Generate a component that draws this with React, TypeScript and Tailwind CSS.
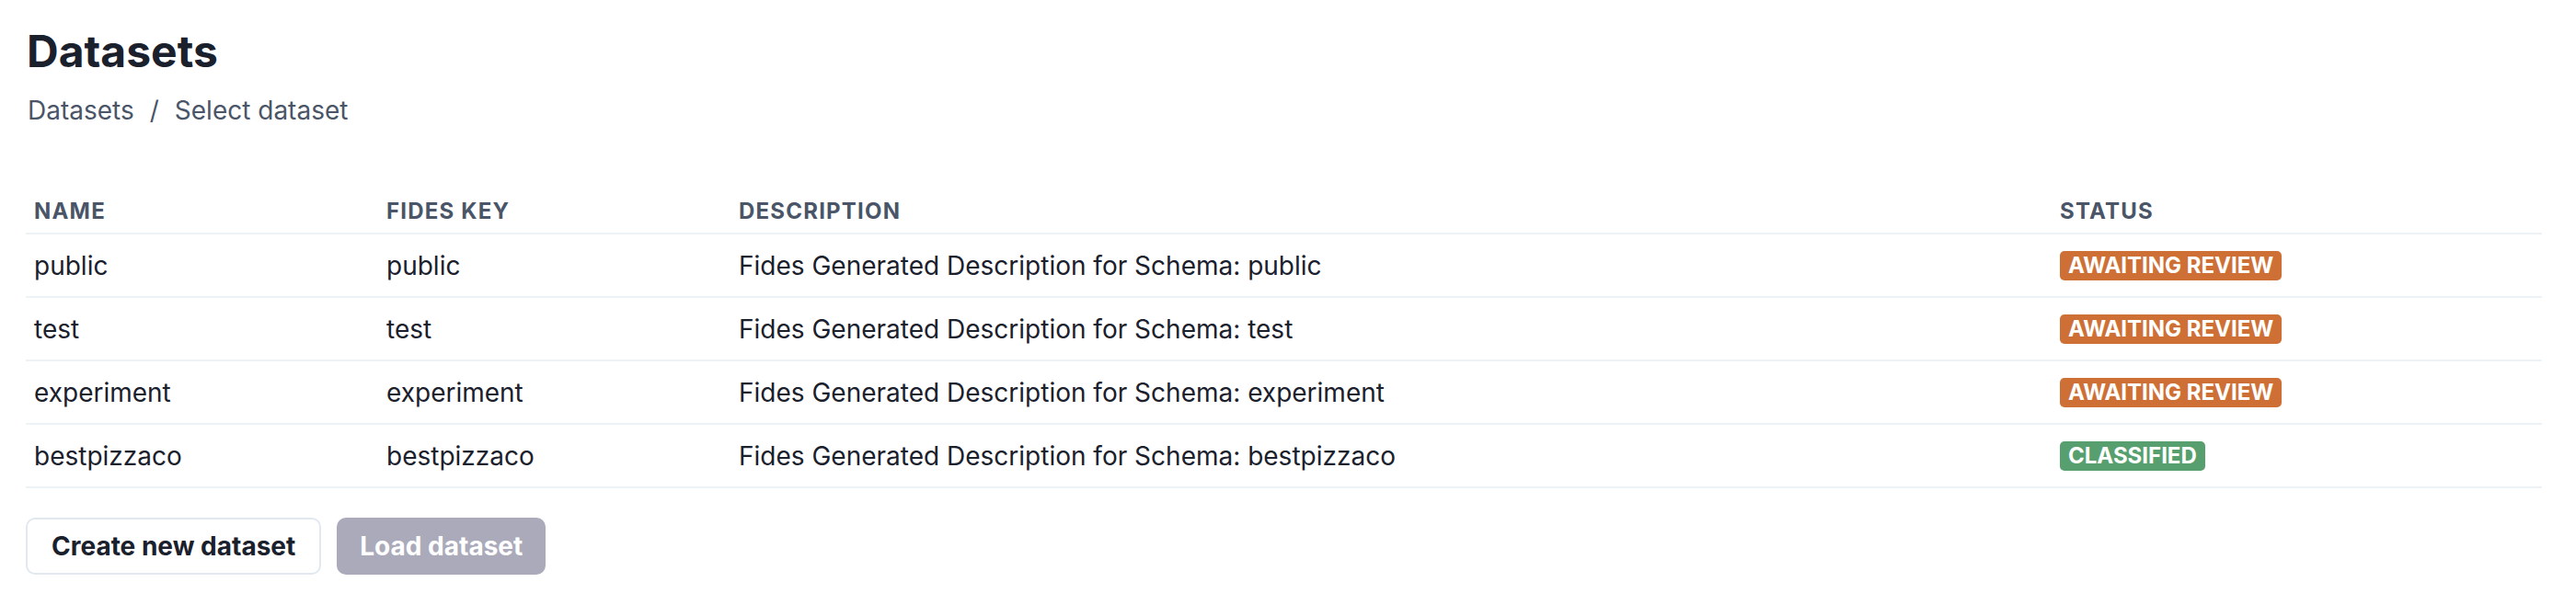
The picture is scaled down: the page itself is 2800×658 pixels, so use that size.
import React from "react";

// ── Datasets page ────────────────────────────────────────────────────────────

type Row = {
  name: string;
  fidesKey: string;
  description: string;
  status: "AWAITING REVIEW" | "CLASSIFIED";
};

const ROWS: Row[] = [
  { name: "public", fidesKey: "public", description: "Fides Generated Description for Schema: public", status: "AWAITING REVIEW" },
  { name: "test", fidesKey: "test", description: "Fides Generated Description for Schema: test", status: "AWAITING REVIEW" },
  { name: "experiment", fidesKey: "experiment", description: "Fides Generated Description for Schema: experiment", status: "AWAITING REVIEW" },
  { name: "bestpizzaco", fidesKey: "bestpizzaco", description: "Fides Generated Description for Schema: bestpizzaco", status: "CLASSIFIED" },
];

const COLS = "grid grid-cols-[383px_383px_1436px_1fr]";

function StatusBadge({ status }: { status: Row["status"] }) {
  const color = status === "CLASSIFIED" ? "bg-[#579f6e]" : "bg-[#ce7036]";
  return (
    <span className={`${color} inline-flex items-center h-[32px] px-[9px] rounded-[5px] text-white text-[24px] font-bold leading-none`}>
      {status}
    </span>
  );
}

export default function App() {
  return (
    <div className="min-h-screen bg-white pl-[28px] pr-[37px] pt-[27px] font-['Inter',sans-serif]">
      {/* Header */}
      <h1 className="text-[48px] leading-[58px] font-bold text-[#1a202c] pl-[1px]">Datasets</h1>
      <div className="mt-[16px] flex items-center text-[28px] leading-[38px] text-[#4a5568] pl-[2px]">
        <span>Datasets</span>
        <span className="mx-[17px]">/</span>
        <span>Select dataset</span>
      </div>

      {/* Table */}
      <div className="mt-[67px]">
        <div className={`${COLS} border-b-2 border-[#edf2f7] pt-[6px] pb-[5px]`}>
          {["NAME", "FIDES KEY", "DESCRIPTION", "STATUS"].map((h) => (
            <div key={h} className="pl-[9px] text-[24px] leading-[36px] font-bold tracking-wider text-[#4a5568]">
              {h}
            </div>
          ))}
        </div>
        {ROWS.map((r) => (
          <div key={r.name} className={`${COLS} h-[69px] border-b-2 border-[#edf2f7] items-center text-[28px] text-[#1a202c]`}>
            <div className="pl-[9px]">{r.name}</div>
            <div className="pl-[9px]">{r.fidesKey}</div>
            <div className="pl-[9px]">{r.description}</div>
            <div className="pl-[9px] flex">
              <StatusBadge status={r.status} />
            </div>
          </div>
        ))}
      </div>

      {/* Actions */}
      <div className="mt-[32px] flex gap-[17px]">
        <button className="h-[62px] px-[26px] rounded-[10px] border-2 border-[#e2e8f0] bg-white text-[28px] font-bold text-[#1a202c]">
          Create new dataset
        </button>
        <button className="h-[62px] px-[25px] rounded-[10px] bg-[#aaaabb] text-[28px] font-bold text-white">
          Load dataset
        </button>
      </div>
    </div>
  );
}
